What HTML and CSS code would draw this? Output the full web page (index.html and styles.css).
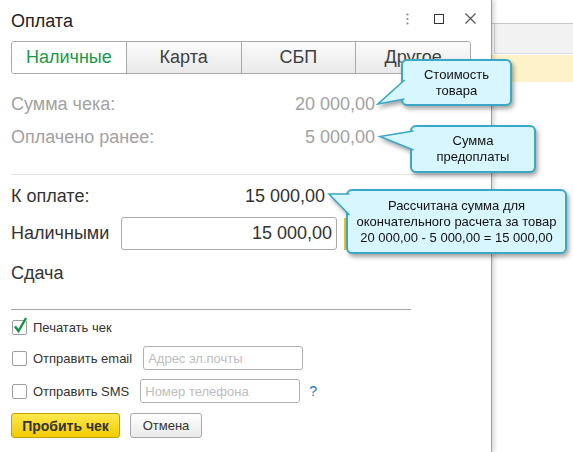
FILE: index.html
```html
<!DOCTYPE html>
<html lang="ru">
<head>
    <meta charset="UTF-8">
    <title>Оплата</title>
    <link rel="stylesheet" href="styles.css">
</head>
<body>
    <div class="screen">
        <div class="dialog">
            <div class="dialog-head">
                <div class="dialog-title">Оплата</div>
                <div class="win-controls">
                    <svg class="ctl-dots" width="3" height="12" viewBox="0 0 3 12"><circle cx="1.5" cy="1.5" r="1.1"/><circle cx="1.5" cy="6" r="1.1"/><circle cx="1.5" cy="10.5" r="1.1"/></svg>
                    <svg class="ctl-max" width="10" height="10" viewBox="0 0 10 10"><rect x="0.5" y="0.5" width="9" height="9" fill="none" stroke="#333"/></svg>
                    <svg class="ctl-close" width="11" height="11" viewBox="0 0 11 11"><path d="M0.5 0.5L10.5 10.5M10.5 0.5L0.5 10.5" stroke="#555" stroke-width="1.2"/></svg>
                </div>
            </div>

            <div class="tabs">
                <div class="tab active">Наличные</div>
                <div class="tab">Карта</div>
                <div class="tab">СБП</div>
                <div class="tab">Другое</div>
            </div>

            <div class="sum-rows">
                <div class="sum-row muted"><span>Сумма чека:</span><span>20 000,00</span></div>
                <div class="sum-row muted"><span>Оплачено ранее:</span><span>5 000,00</span></div>
            </div>

            <div class="divider"></div>

            <div class="sum-row due"><span>К оплате:</span><span>15 000,00</span></div>
            <div class="cash-row">
                <span class="cash-label">Наличными</span>
                <input class="amount-input" type="text" value="15 000,00">
                <span class="focus-mark"></span>
            </div>
            <div class="change-row">Сдача</div>

            <div class="divider dark"></div>

            <div class="opt-row first">
                <span class="check">
                    <svg width="14" height="14"><path d="M2 5.5L5.5 10L13 -3" fill="none" stroke="#159447" stroke-width="2.4"/></svg>
                </span>
                <span class="opt-label">Печатать чек</span>
            </div>
            <div class="opt-row">
                <span class="check"></span>
                <span class="opt-label">Отправить email</span>
                <input class="text-field" type="text" placeholder="Адрес эл.почты">
            </div>
            <div class="opt-row">
                <span class="check"></span>
                <span class="opt-label">Отправить SMS</span>
                <input class="text-field" type="text" placeholder="Номер телефона">
                <span class="hint">?</span>
            </div>

            <div class="actions">
                <button class="btn btn-primary">Пробить чек</button>
                <button class="btn btn-cancel">Отмена</button>
            </div>
        </div>

        <div class="backdrop">
            <div class="bd-top"></div>
            <div class="bd-head"></div>
            <div class="bd-selected"></div>
        </div>

        <div class="callout callout-price">
            <svg class="callout-tail"><path d="M3.5 21L-23 45L3.5 40"/></svg>
            <span>Стоимость<br>товара</span>
        </div>
        <div class="callout callout-prepay">
            <svg class="callout-tail"><path d="M3.5 6L-30 11.5L3.5 25"/></svg>
            <span>Сумма<br>предоплаты</span>
        </div>
        <div class="callout callout-total">
            <svg class="callout-tail"><path d="M3.5 5L-17 5L3.5 26"/></svg>
            <span>Рассчитана сумма для<br>окончательного расчета за товар<br>20 000,00 - 5 000,00 = 15 000,00</span>
        </div>
    </div>
</body>
</html>
```

FILE: styles.css
```css
* {
    margin: 0;
    padding: 0;
    box-sizing: border-box;
}

body {
    font-family: "Liberation Sans", Arial, sans-serif;
    color: #333;
    background: #fff;
    overflow: hidden;
}

.screen {
    position: relative;
    display: flex;
    width: 573px;
    height: 452px;
}

/* dialog */

.dialog {
    position: relative;
    z-index: 1;
    flex: none;
    width: 492px;
    height: 452px;
    padding-left: 11px;
    background: #fff;
    border-right: 1px solid #9d9d9d;
    box-shadow: 2px 0 5px rgba(0,0,0,0.18);
}

.dialog-head {
    display: flex;
    align-items: center;
    height: 41px;
    padding-right: 15px;
}

.dialog-title {
    font-size: 18px;
    line-height: 22px;
    color: #222;
}

.win-controls {
    display: flex;
    align-items: center;
    margin-left: auto;
    margin-bottom: 4px;
}

.win-controls svg {
    display: block;
}

.ctl-dots {
    fill: #888;
    margin-right: 25px;
}

.ctl-max {
    margin-right: 21px;
}

.tabs {
    display: flex;
    width: 460px;
    height: 33px;
    border: 1px solid #a9a9a9;
    border-radius: 3px;
    overflow: hidden;
}

.tab {
    flex: 1;
    display: flex;
    align-items: center;
    justify-content: center;
    font-size: 18px;
    color: #404040;
    background: linear-gradient(#fbfbfb, #e9e9e9);
    border-left: 1px solid #a9a9a9;
}

.tab:first-child {
    border-left: 0;
}

.tab.active {
    background: #fff;
    color: #179a4c;
}

.sum-rows {
    width: 364px;
    margin-top: 14px;
}

.sum-row {
    display: flex;
    justify-content: space-between;
    align-items: center;
    height: 33px;
    font-size: 18px;
}

.muted {
    color: #a2a2a2;
}

.divider {
    height: 1px;
    margin-top: 20px;
    background: #e4e4e4;
}

.divider.dark {
    width: 400px;
    margin-top: 19px;
    background: #a3a3a3;
}

.due {
    width: 314px;
    margin-top: 5px;
}

.cash-row {
    display: flex;
    align-items: center;
    height: 33px;
    margin-top: 4px;
}

.cash-label {
    width: 110px;
    font-size: 18px;
}

.amount-input {
    width: 216px;
    height: 33px;
    padding-right: 4px;
    border: 1px solid #ababab;
    border-radius: 3px;
    font: 18px "Liberation Sans", Arial, sans-serif;
    color: #333;
    text-align: right;
    outline: none;
}

.focus-mark {
    width: 2px;
    height: 32px;
    margin-left: 7px;
    background: #f3c21b;
}

.change-row {
    display: flex;
    align-items: center;
    height: 33px;
    margin-top: 7px;
    font-size: 18px;
}

.opt-row {
    display: flex;
    align-items: center;
    height: 24px;
    margin-top: 8px;
    font-size: 13px;
    color: #333;
}

.opt-row.first {
    height: 22px;
    margin-top: 6px;
}

.opt-row + .opt-row + .opt-row {
    margin-top: 9px;
}

.check {
    position: relative;
    flex: none;
    width: 15px;
    height: 15px;
    margin-left: 1px;
    margin-right: 6px;
    background: #fff;
    border: 1px solid #9e9e9e;
    border-radius: 2px;
}

.check svg {
    position: absolute;
    left: 0;
    top: 0;
    overflow: visible;
}

.opt-label {
    margin-right: 11px;
}

.text-field {
    width: 160px;
    height: 24px;
    padding-left: 4px;
    border: 1px solid #b0b0b0;
    border-radius: 3px;
    font: 13px "Liberation Sans", Arial, sans-serif;
    outline: none;
}

.text-field::placeholder {
    color: #bdbdbd;
}

.hint {
    margin-left: 9px;
    font-size: 14px;
    color: #2175c4;
}

.actions {
    display: flex;
    gap: 10px;
    margin-top: 10px;
}

.btn {
    height: 25px;
    font: 13px "Liberation Sans", Arial, sans-serif;
    color: #333;
    background: linear-gradient(#fff, #e9e9e9);
    border: 1px solid #a8a8a8;
    border-radius: 3px;
}

.btn-primary {
    width: 109px;
    font-size: 14px;
    font-weight: bold;
    background: linear-gradient(#fde84e, #f2cb00);
    border-color: #c2a200;
}

.btn-cancel {
    width: 72px;
}

/* window behind the dialog */

.backdrop {
    flex: 1;
}

.bd-top {
    height: 24px;
    border-bottom: 1px solid #c9c9c9;
}

.bd-head {
    height: 30px;
    margin-left: 2px;
    background: #f2f2f2;
    border-left: 1px solid #d4d4d4;
    border-bottom: 1px solid #dadada;
}

.bd-selected {
    height: 27px;
    margin-top: 1px;
    background: #fdf2c8;
}

/* callouts */

.callout {
    position: absolute;
    z-index: 2;
    display: flex;
    align-items: center;
    justify-content: center;
    text-align: center;
    font-size: 13px;
    line-height: 16px;
    color: #111;
    background: #d8f6fd;
    border: 2px solid #3aa7c6;
    border-radius: 6px;
    filter: drop-shadow(2px 3px 2px rgba(0,0,0,0.35));
}

.callout-tail {
    position: absolute;
    left: -2px;
    top: -2px;
    width: 1px;
    height: 1px;
    overflow: visible;
}

.callout-tail path {
    fill: #d8f6fd;
    stroke: #3aa7c6;
    stroke-width: 1.6;
}

.callout-price {
    left: 401px;
    top: 59px;
    width: 111px;
    height: 47px;
}

.callout-prepay {
    left: 410px;
    top: 125px;
    width: 126px;
    height: 48px;
}

.callout-total {
    left: 346px;
    top: 189px;
    width: 221px;
    height: 65px;
}
```
